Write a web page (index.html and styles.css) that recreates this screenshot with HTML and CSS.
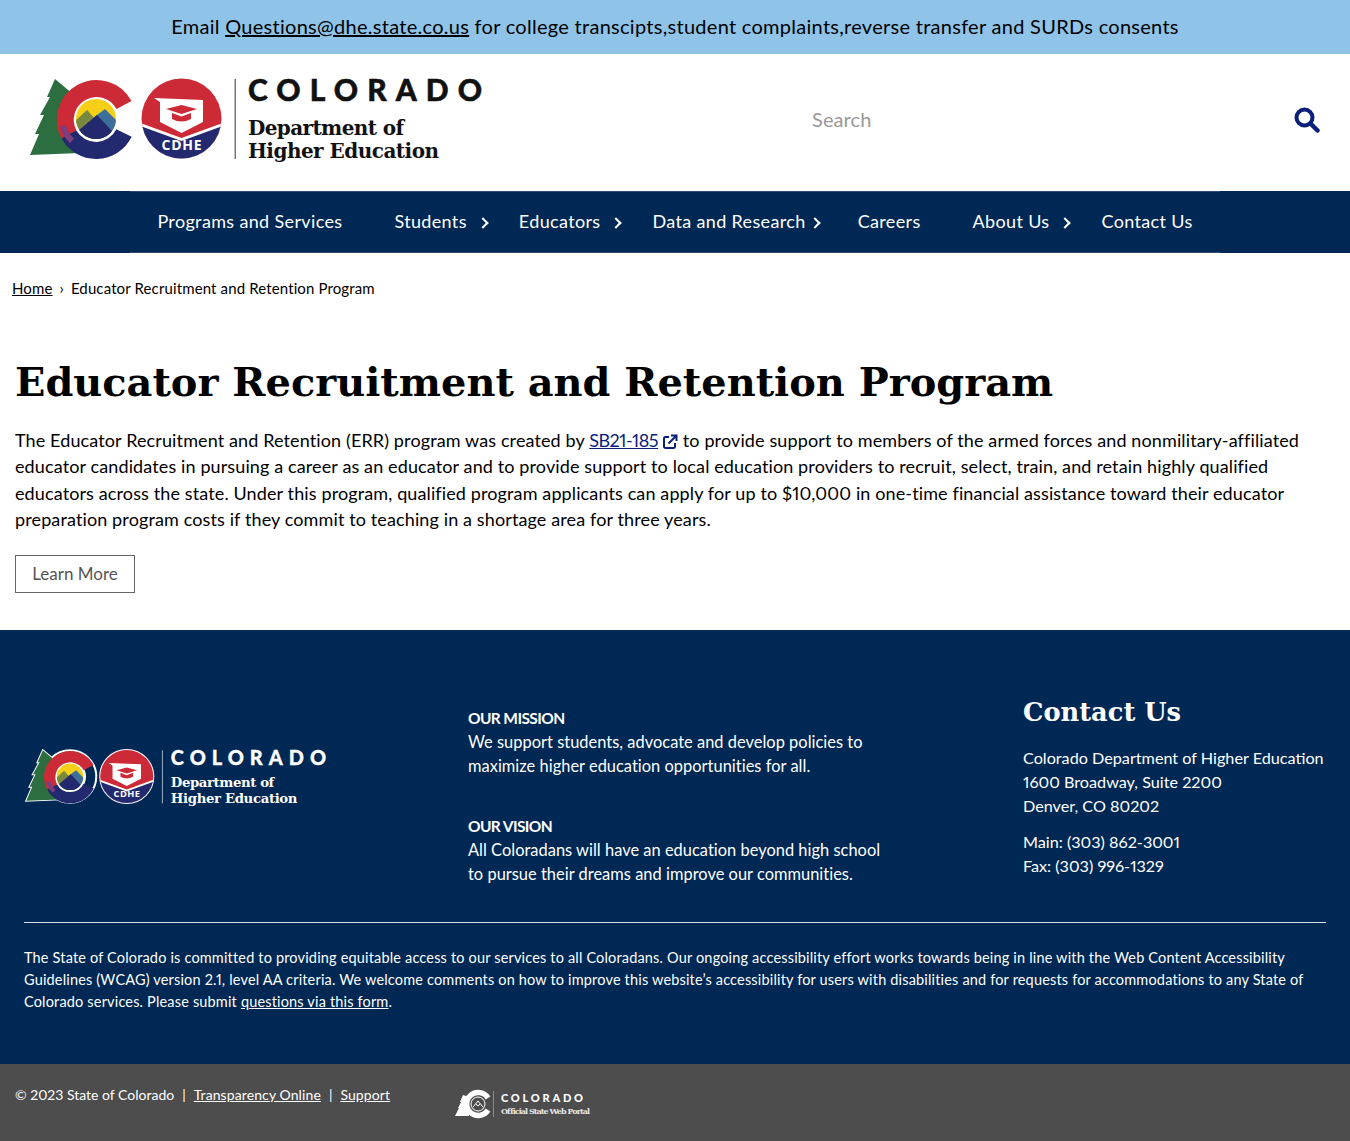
FILE: index.html
```html
<!DOCTYPE html>
<html lang="en">
<head>
<meta charset="utf-8">
<title>Educator Recruitment and Retention Program</title>
<link rel="stylesheet" href="styles.css">
</head>
<body>
<svg class="defs" width="0" height="0" aria-hidden="true">
  <defs>
    <clipPath id="sun"><circle cx="96" cy="119" r="20"/></clipPath>
    <clipPath id="seal"><circle cx="181.5" cy="118.5" r="40"/></clipPath>
    <symbol id="cdhe-logo" viewBox="25 74 460 92">
      <polygon class="halo" points="55,79 47,97 50,97 40,115 44,115 35,134 39,134 30,155 80,153 80,100"/>
      <circle class="halo" cx="96" cy="118.5" r="39.5"/>
      <circle class="halo" cx="181.5" cy="118.5" r="40"/>
      <polygon fill="#2c6e3f" points="55,79 47,97 50,97 40,115 44,115 35,134 39,134 30,155 80,153 80,100"/>
      <circle cx="96" cy="119" r="24" fill="#fff"/>
      <path d="M124 105A31 31 0 1 0 69 134.500" fill="none" stroke="#cc2a36" stroke-width="17"/>
      <path d="M69 134.500A31 31 0 0 0 124 133" fill="none" stroke="#23296f" stroke-width="17"/>
      <path d="M63 126A33 33 0 0 0 72 141" fill="none" stroke="#7b3f7e" stroke-width="6"/>
      <g clip-path="url(#sun)">
        <rect x="74" y="97" width="44" height="44" fill="#f6cf16"/>
        <polygon points="74,122 87,110 97,121 97,141 74,141" fill="#78893e"/>
        <polygon points="93,118 105,109 118,122 118,141 93,141" fill="#3d6f9c"/>
        <polygon points="79,141 79,130 97,115 112,131 112,141" fill="#23296f"/>
      </g>
      <circle cx="181.500" cy="118.500" r="40" fill="#cc2a36"/>
      <g clip-path="url(#seal)">
        <polygon points="135,121 181.500,138 228,121 228,165 135,165" fill="#fff"/>
        <polygon points="135,124 181.500,141 228,124 228,165 135,165" fill="#23296f"/>
      </g>
      <polygon points="154,98 203,100 203,122 181.500,133 160,122 160,102" fill="#fff"/>
      <polygon points="166,109 181.500,105 197,109 181.500,114" fill="#cc2a36"/>
      <path d="M172 113v6q9.500 5 19 0v-6l-9.500 3.500z" fill="#cc2a36"/>
      <text class="seal-text" x="181.500" y="150" text-anchor="middle" textLength="40">CDHE</text>
      <rect class="rule" x="234.500" y="79" width="1.500" height="80"/>
      <text class="logo-title" x="248" y="101" textLength="234">COLORADO</text>
      <text class="logo-sub" x="248" y="135" textLength="156">Department of</text>
      <text class="logo-sub" x="248" y="158" textLength="191">Higher Education</text>
    </symbol>
  </defs>
</svg>

<div class="notice">Email <a href="#">Questions@dhe.state.co.us</a> for college transcipts,student complaints,reverse transfer and SURDs consents</div>

<header class="masthead">
  <a class="brand" href="#"><svg class="brand-logo" viewBox="0 0 460 92" role="img" aria-label="Colorado Department of Higher Education"><use href="#cdhe-logo" width="460" height="92"/></svg></a>
  <form class="search">
    <span class="search-text">Search</span>
    <svg class="search-icon" viewBox="0 0 26 26" aria-hidden="true"><circle cx="10.500" cy="10.500" r="8" fill="none" stroke="#0a1f7a" stroke-width="4"/><path d="M16.500 16.500l7 7" stroke="#0a1f7a" stroke-width="4.500" stroke-linecap="round"/></svg>
  </form>
</header>

<nav class="nav">
  <ul class="nav-list">
    <li class="nav-item"><a href="#">Programs and Services</a></li>
    <li class="nav-item has-sub"><a href="#">Students</a></li>
    <li class="nav-item has-sub"><a href="#">Educators</a></li>
    <li class="nav-item has-sub has-sub--near"><a href="#">Data and Research</a></li>
    <li class="nav-item"><a href="#">Careers</a></li>
    <li class="nav-item has-sub"><a href="#">About Us</a></li>
    <li class="nav-item"><a href="#">Contact Us</a></li>
  </ul>
</nav>

<div class="crumbs"><a href="#">Home</a><span class="crumb-sep">›</span><span>Educator Recruitment and Retention Program</span></div>

<main class="content">
  <h1>Educator Recruitment and Retention Program</h1>
  <p>The Educator Recruitment and Retention (ERR) program was created by <a class="ext" href="#">SB21-185</a><svg class="ext-icon" viewBox="0 0 16 16" aria-hidden="true"><path d="M7 3H3.500A1.500 1.500 0 0 0 2 4.500v8A1.500 1.500 0 0 0 3.500 14h8a1.500 1.500 0 0 0 1.500-1.500V9" fill="none" stroke="#0a1f7a" stroke-width="2"/><path d="M6.500 9.500L13.500 2.500M9 1.500h5.500V7" fill="none" stroke="#0a1f7a" stroke-width="2"/></svg> to provide support to members of the armed forces and nonmilitary-affiliated educator candidates in pursuing a career as an educator and to provide support to local education providers to recruit, select, train, and retain highly qualified educators across the state. Under this program, qualified program applicants can apply for up to $10,000 in one-time financial assistance toward their educator preparation program costs if they commit to teaching in a shortage area for three years.</p>
  <a class="button" href="#">Learn More</a>
</main>

<footer class="footer">
  <div class="footer-top">
    <div class="footer-logo"><svg class="footer-brand" viewBox="0 0 460 92" role="img" aria-label="Colorado Department of Higher Education"><use href="#cdhe-logo" width="460" height="92"/></svg></div>
    <div class="footer-mid">
      <p><strong>OUR MISSION</strong><br>We support students, advocate and develop policies to<br>maximize higher education opportunities for all.</p>
      <p><strong>OUR VISION</strong><br>All Coloradans will have an education beyond high school<br>to pursue their dreams and improve our communities.</p>
    </div>
    <div class="footer-contact">
      <h2>Contact Us</h2>
      <p>Colorado Department of Higher Education<br>1600 Broadway, Suite 2200<br>Denver, CO 80202</p>
      <p>Main: (303) 862-3001<br>Fax: (303) 996-1329</p>
    </div>
  </div>
  <div class="footer-note">The State of Colorado is committed to providing equitable access to our services to all Coloradans. Our ongoing accessibility effort works towards being in line with the Web Content Accessibility Guidelines (WCAG) version 2.1, level AA criteria. We welcome comments on how to improve this website’s accessibility for users with disabilities and for requests for accommodations to any State of Colorado services. Please submit <a href="#">questions via this form</a>.</div>
  <div class="subfooter">
    <div class="legal">© 2023 State of Colorado<span class="pipe">|</span><a href="#">Transparency Online</a><span class="pipe">|</span><a href="#">Support</a></div>
    <svg class="portal" viewBox="0 0 136 30" role="img" aria-label="Colorado Official State Web Portal">
      <polygon points="8,6 5,13 6,13 3,19 4,19 0,27 14,27 14,8" fill="#fff"/>
      <path d="M33 9A11.500 11.500 0 1 0 33 21" fill="none" stroke="#fff" stroke-width="5.500"/>
      <circle cx="23" cy="15" r="7" fill="#4d4d4d" stroke="#fff" stroke-width="1"/>
      <path d="M18 18l5-6 5 6M21 15l2 2 2-2" fill="none" stroke="#fff" stroke-width="1"/>
      <rect x="38" y="2" width="1" height="26" fill="#8a8a8a"/>
      <text class="portal-title" x="46" y="13" textLength="82">COLORADO</text>
      <text class="portal-sub" x="46" y="24.500" textLength="89">Official State Web Portal</text>
    </svg>
  </div>
</footer>
</body>
</html>
```
FILE: styles.css
```css
* { box-sizing: border-box; }
html, body { margin: 0; padding: 0; }
body { font-family: Lato, sans-serif; font-variant-numeric: proportional-nums; color: #000; background: #fff; height: 1141px; overflow: hidden; }
a { color: inherit; }
.defs { position: absolute; }

.notice { height: 54px; background: #8fc4e8; font-size: 20px; letter-spacing: 0.28px; line-height: 52px; text-align: center; }

.masthead { height: 137px; display: flex; align-items: center; justify-content: space-between; padding: 0 30px 5px 25px; }
.brand { display: block; line-height: 0; }
.brand-logo { width: 460px; height: 92px; --halo: none; --logo-text: #111; --rule: #777; }
.search { display: flex; align-items: center; width: 508px; justify-content: space-between; }
.search-text { color: #999; font-size: 20px; letter-spacing: 0.1px; padding-bottom: 2px; }
.search-icon { width: 26px; height: 26px; }

.halo { fill: none; stroke: var(--halo); stroke-width: 3; }
.rule { fill: var(--rule); }
.seal-text { font: 700 14px "Open Sans", sans-serif; fill: #fff; }
.logo-title { font: 900 30px Lato, sans-serif; fill: var(--logo-text); stroke: var(--logo-text); stroke-width: 0.5px; }
.logo-sub { font: 700 20px "DejaVu Serif", serif; fill: var(--logo-text); }

.nav { height: 62px; background: #002855; }
.nav-list { list-style: none; margin: 0 130px; padding: 0 0 2px; height: 62px; display: flex; justify-content: center; align-items: center; border-top: 1px solid #33496e; border-bottom: 1px solid #33496e; }
.nav-item { position: relative; padding: 0 26px; font-size: 18px; letter-spacing: 0.35px; color: #fff; white-space: nowrap; }
.nav-item a { text-decoration: none; }
.has-sub::after { content: ""; position: absolute; right: 6px; top: 50%; width: 6px; height: 6px; margin-top: -2px; border-top: 2px solid #fff; border-right: 2px solid #fff; transform: rotate(45deg); }
.has-sub--near::after { right: 13px; }

.crumbs { padding: 24px 12px 0; font-size: 15px; letter-spacing: 0.13px; line-height: 22px; }
.crumb-sep { margin: 0 7px; }

.content { padding: 53px 15px 37px; }
h1 { margin: 0 0 15px; font: 700 39.900px/60px "DejaVu Serif", serif; }
.content p { margin: 0 0 22px; font-size: 18px; letter-spacing: 0.12px; line-height: 26.4px; }
.ext { color: #0a1f7a; letter-spacing: -0.5px; }
.ext-icon { width: 16px; height: 16px; margin-left: 4px; vertical-align: -3px; }
.button { display: inline-block; width: 120px; height: 38px; border: 1px solid #666; color: #555; font-size: 17px; line-height: 36px; text-align: center; text-decoration: none; }

.footer { background: #002855; color: #fff; }
.footer-top { display: grid; grid-template-columns: 443px 555px 1fr; height: 292px; padding: 64px 0 0 25px; margin: 0 24px 0 0; }
.footer-logo { padding-top: 53px; }
.footer-brand { display: block; width: 307px; height: 61px; margin-left: -3px; --halo: #fff; --logo-text: #fff; --rule: #9fb0c6; }
.footer-mid { font-size: 16.400px; letter-spacing: 0.03px; line-height: 24px; padding-top: 12px; }
.footer-mid p { margin: 0 0 36px; }
.footer-mid strong { font-size: 15.500px; font-weight: 700; letter-spacing: -0.6px; }
.footer-contact { font-size: 16.200px; line-height: 24px; white-space: nowrap; }
.footer-contact h2 { margin: 0 0 16px; font: 700 25.700px/36px "DejaVu Serif", serif; }
.footer-contact p { margin: 0 0 12px; }
.footer-note { margin: 0 24px; padding: 24px 0 0; height: 142px; border-top: 1px solid #d9dfe7; font-size: 14.500px; letter-spacing: 0.17px; line-height: 22px; }
.subfooter { height: 77px; background: #4d4d4d; display: flex; padding: 21px 0 0 15px; }
.legal { width: 440px; font-size: 14px; line-height: 20px; }
.legal a { letter-spacing: 0.1px; }
.pipe { margin: 0 8px; }
.portal { width: 136px; height: 30px; margin-top: 4px; }
.portal-title { font: 900 11px Lato, sans-serif; fill: #fff; }
.portal-sub { font: 700 8px "DejaVu Serif", serif; fill: #e6e6e6; }
```
